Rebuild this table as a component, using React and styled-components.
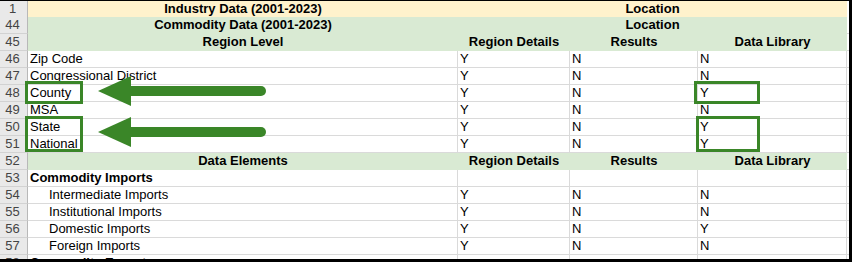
import React from "react";
import styled, { createGlobalStyle } from "styled-components";

const GREEN_FILL = "#D9EAD3";
const GOLD_FILL = "#FFF2CC";
const GRID = "#DADADA";
const MARK = "#3A8628";

const Global = createGlobalStyle`
  html, body { margin: 0; padding: 0; background: #fff; }
  body { font-family: "Liberation Sans", Arial, sans-serif; }
`;

const Frame = styled.div`
  position: relative;
  width: 852px;
  height: 262px;
  box-sizing: border-box;
  border-top: 1px solid #000;
  border-right: 3px solid #000;
  border-bottom: 3px solid #000;
  overflow: hidden;
  background: #fff;
`;

const Sheet = styled.div`
  display: flex;
  flex-direction: column;
`;

const Row = styled.div`
  display: grid;
  grid-template-columns: 28px 430px 112px 128px 149px 2px;
  height: ${(p) => p.$h || 17}px;
  font-size: 13px;
  line-height: 16px;
  color: #000;
`;

const RowNum = styled.div`
  box-sizing: border-box;
  background: #E9E9E9;
  color: #444;
  border-right: 1px solid #B8B8B8;
  border-bottom: 1px solid #D2D2D2;
  text-align: center;
  font-size: 13px;
  line-height: 16px;
  padding-right: 2px;
`;

const Cell = styled.div`
  box-sizing: border-box;
  grid-column: span ${(p) => p.$span || 1};
  background: ${(p) => p.$fill || "#fff"};
  border-bottom: ${(p) => (p.$fill ? "none" : `1px solid ${GRID}`)};
  border-right: ${(p) => (p.$fill || p.$noRight ? "none" : `1px solid ${GRID}`)};
  font-weight: ${(p) => (p.$bold ? 700 : 400)};
  text-align: ${(p) => (p.$center ? "center" : "left")};
  padding-left: ${(p) => (p.$center ? 0 : 2 + (p.$indent || 0))}px;
  white-space: nowrap;
  overflow: visible;
`;

const Highlight = styled.div`
  position: absolute;
  box-sizing: border-box;
  border: 3px solid ${MARK};
  pointer-events: none;
`;

const ArrowSvg = styled.svg`
  position: absolute;
  left: 95px;
  width: 174px;
  height: 34px;
  overflow: visible;
`;

const Arrow = ({ top }) => (
  <ArrowSvg style={{ top }} viewBox="0 0 174 34">
    <rect x="30" y="12" width="141" height="10" rx="5" fill={MARK} />
    <polygon points="3,17 36,2 36,32" fill={MARK} />
  </ArrowSvg>
);

const rows = [
  { n: 1, kind: "title", fill: GOLD_FILL, a: "Industry Data (2001-2023)", loc: "Location", h: 16 },
  { n: 44, kind: "title", fill: GREEN_FILL, a: "Commodity Data (2001-2023)", loc: "Location" },
  { n: 45, kind: "head", a: "Region Level" },
  { n: 46, a: "Zip Code", v: ["Y", "N", "N"] },
  { n: 47, a: "Congressional District", v: ["Y", "N", "N"] },
  { n: 48, a: "County", v: ["Y", "N", "Y"] },
  { n: 49, a: "MSA", v: ["Y", "N", "N"] },
  { n: 50, a: "State", v: ["Y", "N", "Y"] },
  { n: 51, a: "National", v: ["Y", "N", "Y"] },
  { n: 52, kind: "head", a: "Data Elements" },
  { n: 53, kind: "section", a: "Commodity Imports" },
  { n: 54, a: "Intermediate Imports", indent: 19, v: ["Y", "N", "N"] },
  { n: 55, a: "Institutional Imports", indent: 19, v: ["Y", "N", "N"] },
  { n: 56, a: "Domestic Imports", indent: 19, v: ["Y", "N", "Y"] },
  { n: 57, a: "Foreign Imports", indent: 19, v: ["Y", "N", "N"] },
  { n: 58, kind: "section", a: "Commodity Exports" },
];

const SheetRow = ({ r }) => {
  if (r.kind === "title") {
    return (
      <Row $h={r.h}>
        <RowNum>{r.n}</RowNum>
        <Cell $fill={r.fill} $bold $center>{r.a}</Cell>
        <Cell $fill={r.fill} $bold $center $span={3}>{r.loc}</Cell>
        <Cell $noRight />
      </Row>
    );
  }
  if (r.kind === "head") {
    return (
      <Row>
        <RowNum>{r.n}</RowNum>
        <Cell $fill={GREEN_FILL} $bold $center>{r.a}</Cell>
        <Cell $fill={GREEN_FILL} $bold $center>Region Details</Cell>
        <Cell $fill={GREEN_FILL} $bold $center>Results</Cell>
        <Cell $fill={GREEN_FILL} $bold $center>Data Library</Cell>
        <Cell $noRight />
      </Row>
    );
  }
  if (r.kind === "section") {
    return (
      <Row>
        <RowNum>{r.n}</RowNum>
        <Cell $bold>{r.a}</Cell>
        <Cell />
        <Cell />
        <Cell />
        <Cell $noRight />
      </Row>
    );
  }
  return (
    <Row>
      <RowNum>{r.n}</RowNum>
      <Cell $indent={r.indent}>{r.a}</Cell>
      {r.v.map((x, i) => (
        <Cell key={i}>{x}</Cell>
      ))}
      <Cell $noRight />
    </Row>
  );
};

export default function App() {
  return (
    <>
      <Global />
      <Frame>
        <Sheet>
          {rows.map((r) => (
            <SheetRow key={r.n} r={r} />
          ))}
        </Sheet>
        <Highlight style={{ left: 25, top: 80, width: 58, height: 23 }} />
        <Highlight style={{ left: 25, top: 115, width: 58, height: 36 }} />
        <Highlight style={{ left: 694, top: 80, width: 66, height: 23 }} />
        <Highlight style={{ left: 696, top: 115, width: 64, height: 36 }} />
        <Arrow top={72.5} />
        <Arrow top={113.5} />
      </Frame>
    </>
  );
}
